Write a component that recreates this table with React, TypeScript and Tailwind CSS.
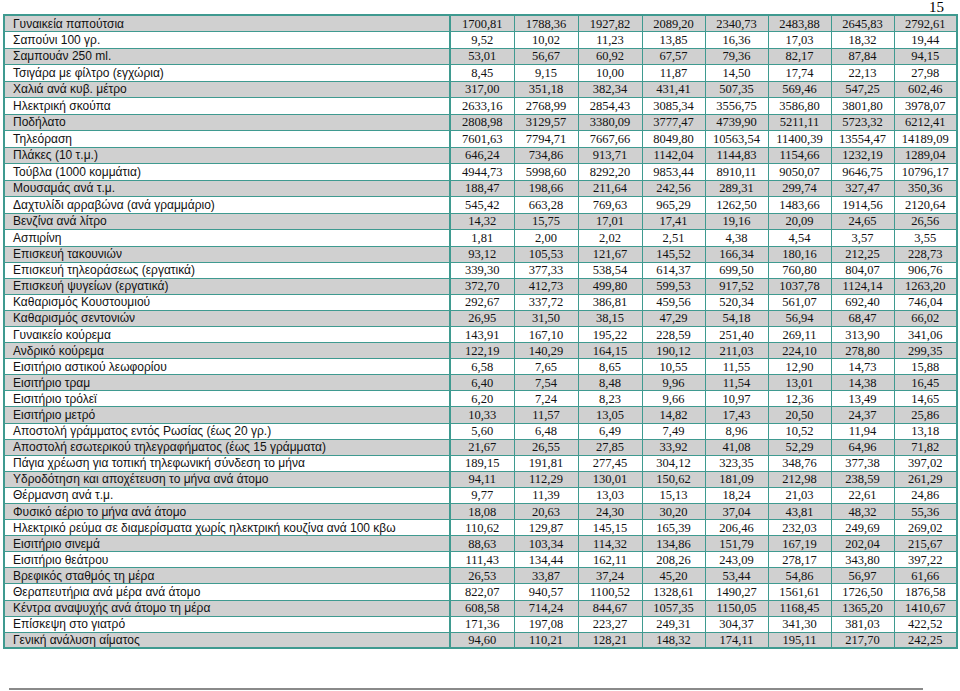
import React from 'react';

type Row = [string, string[]];

const rows: Row[] = [
  ['Γυναικεία παπούτσια', ['1700,81', '1788,36', '1927,82', '2089,20', '2340,73', '2483,88', '2645,83', '2792,61']],
  ['Σαπούνι 100 γρ.', ['9,52', '10,02', '11,23', '13,85', '16,36', '17,03', '18,32', '19,44']],
  ['Σαμπουάν 250 ml.', ['53,01', '56,67', '60,92', '67,57', '79,36', '82,17', '87,84', '94,15']],
  ['Τσιγάρα με φίλτρο (εγχώρια)', ['8,45', '9,15', '10,00', '11,87', '14,50', '17,74', '22,13', '27,98']],
  ['Χαλιά ανά κυβ. μέτρο', ['317,00', '351,18', '382,34', '431,41', '507,35', '569,46', '547,25', '602,46']],
  ['Ηλεκτρική σκούπα', ['2633,16', '2768,99', '2854,43', '3085,34', '3556,75', '3586,80', '3801,80', '3978,07']],
  ['Ποδήλατο', ['2808,98', '3129,57', '3380,09', '3777,47', '4739,90', '5211,11', '5723,32', '6212,41']],
  ['Τηλεόραση', ['7601,63', '7794,71', '7667,66', '8049,80', '10563,54', '11400,39', '13554,47', '14189,09']],
  ['Πλάκες (10 τ.μ.)', ['646,24', '734,86', '913,71', '1142,04', '1144,83', '1154,66', '1232,19', '1289,04']],
  ['Τούβλα (1000 κομμάτια)', ['4944,73', '5998,60', '8292,20', '9853,44', '8910,11', '9050,07', '9646,75', '10796,17']],
  ['Μουσαμάς ανά τ.μ.', ['188,47', '198,66', '211,64', '242,56', '289,31', '299,74', '327,47', '350,36']],
  ['Δαχτυλίδι αρραβώνα (ανά γραμμάριο)', ['545,42', '663,28', '769,63', '965,29', '1262,50', '1483,66', '1914,56', '2120,64']],
  ['Βενζίνα ανά λίτρο', ['14,32', '15,75', '17,01', '17,41', '19,16', '20,09', '24,65', '26,56']],
  ['Ασπιρίνη', ['1,81', '2,00', '2,02', '2,51', '4,38', '4,54', '3,57', '3,55']],
  ['Επισκευή τακουνιών', ['93,12', '105,53', '121,67', '145,52', '166,34', '180,16', '212,25', '228,73']],
  ['Επισκευή τηλεοράσεως (εργατικά)', ['339,30', '377,33', '538,54', '614,37', '699,50', '760,80', '804,07', '906,76']],
  ['Επισκευή ψυγείων (εργατικά)', ['372,70', '412,73', '499,80', '599,53', '917,52', '1037,78', '1124,14', '1263,20']],
  ['Καθαρισμός Κουστουμιού', ['292,67', '337,72', '386,81', '459,56', '520,34', '561,07', '692,40', '746,04']],
  ['Καθαρισμός σεντονιών', ['26,95', '31,50', '38,15', '47,29', '54,18', '56,94', '68,47', '66,02']],
  ['Γυναικείο κούρεμα', ['143,91', '167,10', '195,22', '228,59', '251,40', '269,11', '313,90', '341,06']],
  ['Ανδρικό κούρεμα', ['122,19', '140,29', '164,15', '190,12', '211,03', '224,10', '278,80', '299,35']],
  ['Εισιτήριο αστικού λεωφορίου', ['6,58', '7,65', '8,65', '10,55', '11,55', '12,90', '14,73', '15,88']],
  ['Εισιτήριο τραμ', ['6,40', '7,54', '8,48', '9,96', '11,54', '13,01', '14,38', '16,45']],
  ['Εισιτήριο τρόλεϊ', ['6,20', '7,24', '8,23', '9,66', '10,97', '12,36', '13,49', '14,65']],
  ['Εισιτήριο μετρό', ['10,33', '11,57', '13,05', '14,82', '17,43', '20,50', '24,37', '25,86']],
  ['Αποστολή γράμματος εντός Ρωσίας (έως 20 γρ.)', ['5,60', '6,48', '6,49', '7,49', '8,96', '10,52', '11,94', '13,18']],
  ['Αποστολή εσωτερικού τηλεγραφήματος (έως 15 γράμματα)', ['21,67', '26,55', '27,85', '33,92', '41,08', '52,29', '64,96', '71,82']],
  ['Πάγια χρέωση για τοπική τηλεφωνική σύνδεση το μήνα', ['189,15', '191,81', '277,45', '304,12', '323,35', '348,76', '377,38', '397,02']],
  ['Υδροδότηση και αποχέτευση το μήνα ανά άτομο', ['94,11', '112,29', '130,01', '150,62', '181,09', '212,98', '238,59', '261,29']],
  ['Θέρμανση ανά τ.μ.', ['9,77', '11,39', '13,03', '15,13', '18,24', '21,03', '22,61', '24,86']],
  ['Φυσικό αέριο το μήνα ανά άτομο', ['18,08', '20,63', '24,30', '30,20', '37,04', '43,81', '48,32', '55,36']],
  ['Ηλεκτρικό ρεύμα σε διαμερίσματα χωρίς ηλεκτρική κουζίνα ανά 100 κβω', ['110,62', '129,87', '145,15', '165,39', '206,46', '232,03', '249,69', '269,02']],
  ['Εισιτήριο σινεμά', ['88,63', '103,34', '114,32', '134,86', '151,79', '167,19', '202,04', '215,67']],
  ['Εισιτήριο θεάτρου', ['111,43', '134,44', '162,11', '208,26', '243,09', '278,17', '343,80', '397,22']],
  ['Βρεφικός σταθμός τη μέρα', ['26,53', '33,87', '37,24', '45,20', '53,44', '54,86', '56,97', '61,66']],
  ['Θεραπευτήρια ανά μέρα ανά άτομο', ['822,07', '940,57', '1100,52', '1328,61', '1490,27', '1561,61', '1726,50', '1876,58']],
  ['Κέντρα αναψυχής ανά άτομο τη μέρα', ['608,58', '714,24', '844,67', '1057,35', '1150,05', '1168,45', '1365,20', '1410,67']],
  ['Επίσκεψη στο γιατρό', ['171,36', '197,08', '223,27', '249,31', '304,37', '341,30', '381,03', '422,52']],
  ['Γενική ανάλυση αίματος', ['94,60', '110,21', '128,21', '148,32', '174,11', '195,11', '217,70', '242,25']],
];

export default function App() {
  return (
    <div className="w-[960px] h-[691px] bg-white overflow-hidden relative">
      {/* page number */}
      <div className="h-[14px] flex justify-end pr-[16px]">
        <span className="font-['Liberation_Serif',serif] text-[15px] leading-[14px] text-black">15</span>
      </div>

      <table className="ml-[3px] w-[953px] table-fixed border-collapse border-2 border-[#3f9a90]">
        <colgroup>
          <col className="w-[446px]" />
          <col className="w-[64px]" />
          <col className="w-[64px]" />
          <col className="w-[64px]" />
          <col className="w-[63px]" />
          <col className="w-[63px]" />
          <col className="w-[63px]" />
          <col className="w-[63px]" />
          <col className="w-[63px]" />
        </colgroup>
        <tbody>
          {rows.map(([label, vals], i) => (
            <tr
              key={i}
              className={`${i < 14 ? 'h-[16.5px]' : 'h-[16.1px]'} ${i % 2 === 0 ? 'bg-[#d0d0d0]' : 'bg-white'}`}
            >
              <td className="border border-[#3f9a90] border-r-2 pl-[8px] p-0 font-['Liberation_Sans',Arial,sans-serif] text-[12px] leading-[14px] text-[#111] whitespace-nowrap overflow-hidden">
                {label}
              </td>
              {vals.map((v, j) => (
                <td
                  key={j}
                  className="border border-[#3f9a90] p-0 text-center font-['Liberation_Serif','Times_New_Roman',serif] text-[12.5px] leading-[14px] text-[#111] whitespace-nowrap"
                >
                  {v}
                </td>
              ))}
            </tr>
          ))}
        </tbody>
      </table>

      <div className="absolute left-[9px] top-[688px] w-[914px] h-[2px] bg-[#8a8a8a]" />
    </div>
  );
}
